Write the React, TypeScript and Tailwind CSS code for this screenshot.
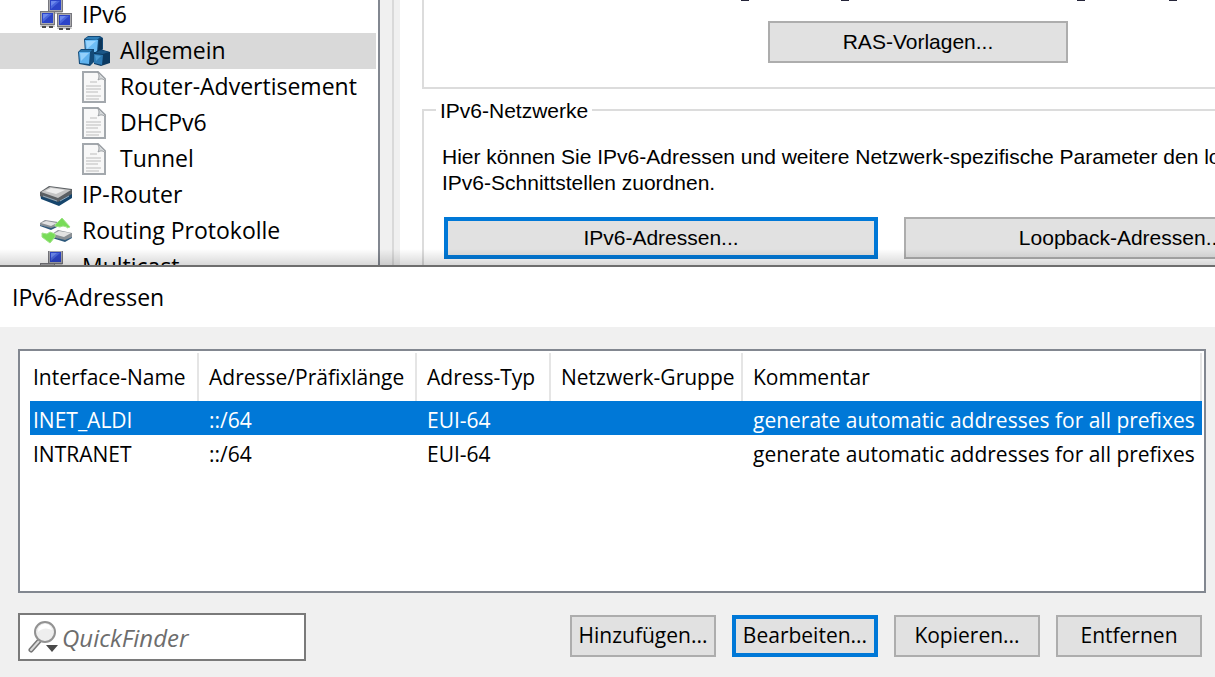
import React from "react";
import clsx from "clsx";

type IconProps = { className?: string };

function Monitor({ x, y }: { x: number; y: number }) {
  return (
    <g transform={`translate(${x} ${y})`}>
      <path d="M1 13h13l1 3H0z" fill="#c4c4c4" />
      <path d="M2 15h4v2H2zM9 15h4v2H9z" fill="#4a4a4a" />
      <rect x="0.5" y="0.5" width="14" height="13" fill="#a9a9ad" stroke="#77777d" />
      <rect x="2" y="2" width="11" height="10" fill="#2c44c8" />
      <path d="M3 3h9L3 11z" fill="#4a66dc" />
      <path d="M3 3h6L3 8z" fill="#6c88ec" />
    </g>
  );
}

function NetworkIcon({ className }: IconProps) {
  return (
    <svg viewBox="0 0 32 32" className={className} aria-hidden="true">
      <Monitor x={8} y={-1} />
      <Monitor x={0} y={12} />
      <Monitor x={17} y={14} />
    </svg>
  );
}

function CubesIcon({ className }: IconProps) {
  return (
    <svg viewBox="0 0 32 32" className={className} aria-hidden="true">
      <path d="M6 4l4-3h12l3 2v11l-4 4H7z" fill="#134a78" />
      <path d="M7 4l3-2h12l-3 3z" fill="#2f7fb8" />
      <path d="M7 5h13l-1 12H8z" fill="#6dbdf5" />
      <path d="M8 6h10l-9 8z" fill="#9bd6ff" />
      <path d="M21 5l3-2v11l-4 3z" fill="#0d3558" />
      <path d="M0 17l3-3h13v13l-4 4-11-2z" fill="#134a78" />
      <path d="M1 17h11l-1 12-9-1z" fill="#5fb2ee" />
      <path d="M2 18h9l-8 8z" fill="#93d0fb" />
      <path d="M3 15h11l-2 2H1z" fill="#2774ab" />
      <path d="M16 18l6-4 10 3v11l-9 3-7-2z" fill="#0c3a62" />
      <path d="M16 19l9 1-1 10-8-2z" fill="#2d7ab4" />
      <path d="M17 20l6 1-5 5z" fill="#4c9bd2" />
      <path d="M17 18l6-3 8 2-6 2z" fill="#1a5687" />
    </svg>
  );
}

function PageIcon({ className }: IconProps) {
  return (
    <svg viewBox="0 0 32 32" className={className} aria-hidden="true">
      <path d="M5 1h15l7 7v23H5z" fill="#f8f8f8" stroke="#a3a8ad" strokeWidth="2" />
      <path d="M19 1c3 2 2 6 1 8 3-2 6-1 7 1V8l-7-7z" fill="#d5d8da" stroke="#9b9fa3" />
      <path d="M12 11h7M8 15h15M8 18h15M8 21h12M8 25h15M8 28h13" stroke="#bcbcbc" />
    </svg>
  );
}

function RouterIcon({ className }: IconProps) {
  return (
    <svg viewBox="0 0 32 32" className={className} aria-hidden="true">
      <path d="M0 14l17 5 15-7v7l-13 8L1 20z" fill="#16456c" />
      <path d="M0 13l9-6 23 3v5l-14 8L0 17z" fill="#5b5f63" />
      <path d="M1 13l9-5 21 3-13 8z" fill="#c4c4c4" />
      <path d="M5 12l6-3 14 2-9 4z" fill="#ededed" />
      <path d="M3 17l14 5M20 22l9-5" stroke="#8fa9bd" />
    </svg>
  );
}

function RoutingIcon({ className }: IconProps) {
  return (
    <svg viewBox="0 0 32 32" className={className} aria-hidden="true">
      <path d="M0 8l5-3 13 2v3l-6 4-12-4z" fill="#8a9095" />
      <path d="M1 8l5-2 11 2-6 3z" fill="#e2e2e2" />
      <path d="M0 10l11 3 6-2v1l-6 3-11-4z" fill="#2d587b" />
      <path d="M12 19l6-4 14 3v4l-7 4-13-4z" fill="#8a9095" />
      <path d="M13 19l6-3 12 2-7 4z" fill="#e2e2e2" />
      <path d="M12 22l13 3 7-3v1l-7 4-13-4z" fill="#2d587b" />
      <path d="M15 10l7-7 8 9-3 1v-1l-4-1-3 1-5-1z" fill="#78dc58" stroke="#9fe388" />
      <path d="M2 18l5 1 3-2 5 2v3l-5 6-8-6z" fill="#78dc58" stroke="#9fe388" />
    </svg>
  );
}

function FinderIcon({ className }: IconProps) {
  return (
    <svg viewBox="0 0 32 32" className={className} aria-hidden="true">
      <path d="M11 20L3 29" stroke="#777" strokeWidth="5" strokeLinecap="round" />
      <path d="M11 20L3 29" stroke="#dadada" strokeWidth="2" strokeLinecap="round" />
      <circle cx="17" cy="11" r="10" fill="#eeeeee" stroke="#929292" strokeWidth="2" />
      <path d="M10 11q6-6 14-2a7 7 0 0 0-14 2z" fill="#fff" />
      <path d="M18 24h12l-6 7z" fill="#4a4a4a" />
    </svg>
  );
}

const treeItems = [
  { label: "IPv6", icon: NetworkIcon, nested: false },
  { label: "Allgemein", icon: CubesIcon, nested: true, selected: true },
  { label: "Router-Advertisement", icon: PageIcon, nested: true },
  { label: "DHCPv6", icon: PageIcon, nested: true },
  { label: "Tunnel", icon: PageIcon, nested: true },
  { label: "IP-Router", icon: RouterIcon, nested: false },
  { label: "Routing Protokolle", icon: RoutingIcon, nested: false },
  { label: "Multicast", icon: NetworkIcon, nested: false },
];

const columns = [
  { label: "Interface-Name", width: "w-[169px]" },
  { label: "Adresse/Präfixlänge", width: "w-[218px]" },
  { label: "Adress-Typ", width: "w-[134px]" },
  { label: "Netzwerk-Gruppe", width: "w-[192px]" },
  { label: "Kommentar", width: "" },
];

const addresses = [
  ["INET_ALDI", "::/64", "EUI-64", "", "generate automatic addresses for all prefixes"],
  ["INTRANET", "::/64", "EUI-64", "", "generate automatic addresses for all prefixes"],
];

type ButtonProps = React.ComponentProps<"button"> & { active?: boolean };

function Button({ active, className, ...props }: ButtonProps) {
  return (
    <button
      type="button"
      className={clsx(
        "flex h-[42px] shrink-0 items-center justify-center whitespace-nowrap bg-[#e1e1e1] text-black",
        active ? "border-4 border-[#0078d7]" : "border-2 border-[#adadad]",
        className
      )}
      {...props}
    />
  );
}

function Tree() {
  return (
    <nav className="w-[380px] shrink-0 border-r-2 border-[#828790] bg-white pr-0.5 font-['Open_Sans',sans-serif] text-[23px]">
      <ul className="-mt-[3px]">
        {treeItems.map(({ label, icon: Icon, nested, selected }) => (
          <li key={label}>
            <a
              href="#"
              className={clsx(
                "flex h-9 items-center gap-2.5 whitespace-nowrap",
                nested ? "pl-[78px]" : "pl-10",
                selected && "bg-[#d9d9d9]"
              )}
            >
              <Icon className="size-8 shrink-0" />
              <span className="pb-0.5">{label}</span>
            </a>
          </li>
        ))}
      </ul>
    </nav>
  );
}

function Settings() {
  return (
    <main className="relative min-w-0 flex-1 overflow-hidden bg-white pl-[22px] font-['Liberation_Sans',sans-serif] text-[21px]">
      {/* descenders of the line scrolled out above */}
      <svg className="absolute top-0 left-[340px] h-px w-[440px]" viewBox="0 0 440 1" aria-hidden="true">
        <path d="M1 0h8v1H1zM101 0h8v1h-8zM337 0h8v1h-8zM429 0h8v1h-8z" fill="#26263a" />
      </svg>
      <section className="flex h-[89px] border-b-2 border-l-2 border-[#dcdcdc] pt-[21px] pl-[344px]">
        <Button className="w-[300px]">RAS-Vorlagen...</Button>
      </section>
      <fieldset className="mt-1.5 h-[200px] min-w-0 border-t-2 border-l-2 border-[#dcdcdc] pl-[18px]">
        <legend className="-ml-1.5 h-[30px] px-1 leading-8">IPv6-Netzwerke</legend>
        <p className="mt-[19px] whitespace-nowrap leading-[26px]">
          Hier können Sie IPv6-Adressen und weitere Netzwerk-spezifische Parameter den lo
          <br />
          IPv6-Schnittstellen zuordnen.
        </p>
        <div className="mt-[21px] ml-0.5 flex gap-[26px]">
          <Button active className="w-[434px]">IPv6-Adressen...</Button>
          <Button className="w-[434px]">Loopback-Adressen...</Button>
        </div>
      </fieldset>
    </main>
  );
}

function AddressTable() {
  return (
    <div className="flex-1 border-2 border-[#828790] bg-white pt-0.5 pr-0.5 pl-2.5">
      <table className="w-full table-fixed border-separate border-spacing-0 text-left">
        <thead>
          <tr className="h-12">
            {columns.map(({ label, width }, i) => (
              <th
                key={label}
                className={clsx(
                  "whitespace-nowrap border-r-2 border-[#e5e5e5] p-0 pt-0.5 font-normal",
                  i === 0 ? "pl-[3px]" : "pl-2.5",
                  width
                )}
              >
                {label}
              </th>
            ))}
          </tr>
        </thead>
        <tbody>
          {addresses.map((row, r) => (
            <tr key={row[0]} className={clsx("h-[34px] leading-[30px]", r === 0 && "bg-[#0078d7] text-white")}>
              {row.map((cell, i) => (
                <td key={i} className={clsx("whitespace-nowrap p-0 pt-1", i === 0 ? "pl-[3px]" : "pl-2.5")}>
                  {cell}
                </td>
              ))}
            </tr>
          ))}
        </tbody>
      </table>
    </div>
  );
}

function AddressDialog() {
  return (
    <section
      aria-labelledby="dialog-title"
      className="flex flex-1 flex-col border-t-2 border-[#6e6e6e] bg-[#f0f0f0] font-['Open_Sans',sans-serif] text-[21px]"
    >
      <h1 id="dialog-title" className="flex h-[60px] items-center bg-white px-3 text-[23px]">
        IPv6-Adressen
      </h1>
      <div className="flex flex-1 flex-col pt-[22px] pr-[9px] pb-4 pl-[18px]">
        <AddressTable />
        <div className="mt-5 flex items-start justify-between pr-1">
          <label className="flex h-12 w-72 items-center gap-0.5 border-2 border-[#7a7a7a] bg-white pl-2">
            <FinderIcon className="size-8 shrink-0" />
            <input
              type="text"
              aria-label="QuickFinder"
              placeholder="QuickFinder"
              className="min-w-0 flex-1 pt-0.5 text-[24px] italic outline-none placeholder:text-[#6d6d6d]"
            />
          </label>
          <div className="flex gap-4 pt-0.5">
            <Button className="w-[146px]">Hinzufügen...</Button>
            <Button active className="w-[146px]">Bearbeiten...</Button>
            <Button className="w-[146px]">Kopieren...</Button>
            <Button className="w-[146px]">Entfernen</Button>
          </div>
        </div>
      </div>
    </section>
  );
}

export default function App() {
  return (
    <div className="flex min-h-screen flex-col overflow-hidden text-black">
      <div className="relative flex h-[265px] shrink-0 overflow-hidden">
        <Tree />
        <div className="w-5 shrink-0 bg-[#f0f0f0] pl-3">
          <div className="h-full w-0.5 bg-[#d9d9d9]" />
        </div>
        <Settings />
        {/* shadow cast by the dialog */}
        <div className="pointer-events-none absolute inset-x-0 bottom-0 h-4 bg-linear-to-t from-black/15 to-transparent" />
      </div>
      <AddressDialog />
    </div>
  );
}
